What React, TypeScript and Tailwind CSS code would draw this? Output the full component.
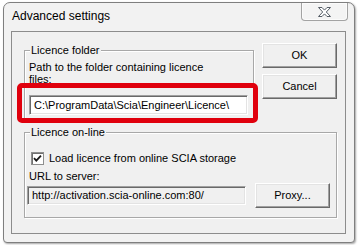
export default function App() {
	const ui = { fontFamily: '"Liberation Sans", Arial, sans-serif' }

	return (
		<div className="w-[360px] h-[245px] bg-white pl-[3px] pt-[2px]" style={ui}>
			<div className="w-[352px] h-[241px] flex flex-col border border-[#7f7f7f] rounded-t-[7px] rounded-b-[4px] bg-[#f2f2f2] shadow-[1px_1px_2px_rgba(0,0,0,0.35)]">
				{/* title bar */}
				<div className="h-[28px] flex items-start justify-between">
					<div className="pl-[8px] pt-[5px] text-[12px] leading-[16px] text-black">Advanced settings</div>
					<div className="mr-[6px] w-[47px] h-[18px] flex items-center justify-center border border-t-0 border-[#a3a3a3] rounded-b-[4px] bg-[#f4f4f4] shadow-[inset_0_0_0_1px_#fbfbfb]">
						<svg width="15" height="12" viewBox="0 0 15 12">
							<path
								d="M1.5 1.5h3.5l2.5 2.6 2.5-2.6h3.5l-4.2 4.5 4.2 4.5h-3.5l-2.5-2.6-2.5 2.6h-3.5l4.2-4.5z"
								fill="#ffffff"
								stroke="#555d66"
								strokeWidth="1"
								strokeLinejoin="round"
							/>
						</svg>
					</div>
				</div>

				{/* client area */}
				<div className="relative ml-[7px] w-[335px] h-[203px] border border-[#8c8c8c] bg-[#f0f0f0] text-[11px] text-black">
					<div className="flex items-start pl-[12px] pt-[11px]">
						<div className="mt-[7px] w-[230px] h-[70px] border border-[#a8a8a8] shadow-[inset_1px_1px_0_#fff,1px_1px_0_#fff]">
							<div className="-mt-[8px] ml-[5px] w-fit px-[1px] h-[14px] leading-[14px] bg-[#f0f0f0]">Licence folder</div>
							<div className="mt-[4px] pl-[4px] w-[200px] leading-[12px]">Path to the folder containing licence files:</div>
							<div className="mt-[10px] ml-[4px] w-[219px] h-[20px] flex items-center pl-[4px] bg-white border border-t-[#a0a0a0] border-l-[#a0a0a0] border-r-white border-b-white shadow-[inset_1px_1px_0_#696969,inset_-1px_-1px_0_#e3e3e3] whitespace-nowrap">
								C:\ProgramData\Scia\Engineer\Licence\
							</div>
						</div>
						<div className="ml-[8px] flex flex-col gap-[6px]">
							<button className="w-[75px] h-[25px] bg-[#f0f0f0] border border-t-white border-l-white border-r-[#696969] border-b-[#696969] shadow-[inset_-1px_-1px_0_#a0a0a0,inset_1px_1px_0_#e3e3e3] text-[11px]">OK</button>
							<button className="w-[75px] h-[25px] bg-[#f0f0f0] border border-t-white border-l-white border-r-[#696969] border-b-[#696969] shadow-[inset_-1px_-1px_0_#a0a0a0,inset_1px_1px_0_#e3e3e3] text-[11px]">Cancel</button>
						</div>
					</div>

					<div className="ml-[12px] mt-[12px] w-[313px] h-[86px] border border-[#a8a8a8] shadow-[inset_1px_1px_0_#fff,1px_1px_0_#fff]">
						<div className="-mt-[8px] ml-[5px] w-fit px-[1px] h-[14px] leading-[14px] bg-[#f0f0f0]">Licence on-line</div>
						<div className="mt-[13px] pl-[6px] flex items-center h-[13px]">
							<div className="w-[13px] h-[13px] flex items-center justify-center bg-white border border-[#8e8f8f] shadow-[inset_1px_1px_0_#6f6f6f]">
								<svg width="9" height="9" viewBox="0 0 9 9">
									<path d="M1 4.2l2.3 2.4L8 1.6" fill="none" stroke="#1a1a1a" strokeWidth="1.8" />
								</svg>
							</div>
							<span className="ml-[5px] leading-[13px]">Load licence from online SCIA storage</span>
						</div>
						<div className="mt-[5px] pl-[4px] leading-[12px]">URL to server:</div>
						<div className="mt-[1px] pl-[2px] flex items-center">
							<div className="w-[219px] h-[19px] flex items-center pl-[4px] bg-[#f0f0f0] border border-t-[#a0a0a0] border-l-[#a0a0a0] border-r-white border-b-white shadow-[inset_1px_1px_0_#696969,inset_-1px_-1px_0_#e3e3e3] whitespace-nowrap">
								http://activation.scia-online.com:80/
							</div>
							<button className="ml-[9px] w-[75px] h-[25px] bg-[#f0f0f0] border border-t-white border-l-white border-r-[#696969] border-b-[#696969] shadow-[inset_-1px_-1px_0_#a0a0a0,inset_1px_1px_0_#e3e3e3] text-[11px]">Proxy...</button>
						</div>
					</div>

					{/* red annotation frame */}
					<div className="absolute left-[5px] top-[51px] w-[241px] h-[40px] border-[5px] border-[#e0000d] rounded-[5px]" />
				</div>
			</div>
		</div>
	)
}
